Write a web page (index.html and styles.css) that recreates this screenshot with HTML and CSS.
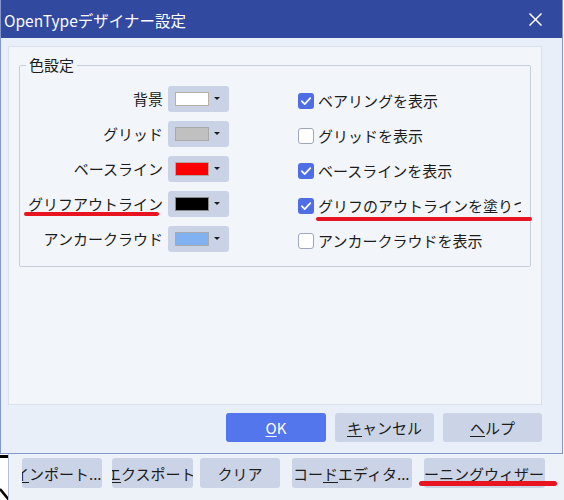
FILE: index.html
```html
<!DOCTYPE html>
<html lang="ja">
<head>
<meta charset="utf-8">
<title>OpenTypeデザイナー設定</title>
<link rel="stylesheet" href="styles.css">
</head>
<body>
<div class="screen">
  <div class="dialog">
    <div class="titlebar">
      <span class="title">OpenTypeデザイナー設定</span>
      <svg class="close" width="13" height="13" viewBox="0 0 13 13"><path d="M0.5 0.5L12.5 12.5M12.5 0.5L0.5 12.5" stroke="#fff" stroke-width="1.5" fill="none"/></svg>
    </div>
    <div class="body">
      <div class="panel">
        <fieldset class="group">
          <legend>色設定</legend>
          <div class="grid">
            <div class="label">背景</div>
            <div class="combo"><span class="swatch sw-white"></span><span class="arrow"></span></div>
            <div class="check"><span class="box on"><svg width="16" height="16" viewBox="0 0 16 16"><path d="M3.8 8.2L6.7 11.1L12.3 5.2" stroke="#fff" stroke-width="1.7" fill="none" stroke-linecap="round" stroke-linejoin="round"/></svg></span><span class="ctext">ベアリングを表示</span></div>

            <div class="label">グリッド</div>
            <div class="combo"><span class="swatch sw-grey"></span><span class="arrow"></span></div>
            <div class="check"><span class="box"></span><span class="ctext">グリッドを表示</span></div>

            <div class="label">ベースライン</div>
            <div class="combo"><span class="swatch sw-red"></span><span class="arrow"></span></div>
            <div class="check"><span class="box on"><svg width="16" height="16" viewBox="0 0 16 16"><path d="M3.8 8.2L6.7 11.1L12.3 5.2" stroke="#fff" stroke-width="1.7" fill="none" stroke-linecap="round" stroke-linejoin="round"/></svg></span><span class="ctext">ベースラインを表示</span></div>

            <div class="label">グリフアウトライン</div>
            <div class="combo"><span class="swatch sw-black"></span><span class="arrow"></span></div>
            <div class="check"><span class="box on"><svg width="16" height="16" viewBox="0 0 16 16"><path d="M3.8 8.2L6.7 11.1L12.3 5.2" stroke="#fff" stroke-width="1.7" fill="none" stroke-linecap="round" stroke-linejoin="round"/></svg></span><span class="ctext">グリフのアウトラインを塗りつぶす</span></div>

            <div class="label">アンカークラウド</div>
            <div class="combo"><span class="swatch sw-blue"></span><span class="arrow"></span></div>
            <div class="check"><span class="box"></span><span class="ctext">アンカークラウドを表示</span></div>
          </div>
        </fieldset>
      </div>
      <div class="actions">
        <button class="btn primary"><u>O</u>K</button>
        <button class="btn"><u>キ</u>ャンセル</button>
        <button class="btn"><u>ヘ</u>ルプ</button>
      </div>
    </div>
  </div>
  <div class="behind">
    <div class="edge">
      <svg width="8" height="46" viewBox="0 0 8 46"><path d="M0 2.5H8" stroke="#000" stroke-width="3"/><path d="M0 35L9 46" stroke="#000" stroke-width="2.5"/></svg>
    </div>
    <div class="tools">
      <button class="tbtn t-imp"><span class="tt"><u>イ</u>ンポート...</span></button>
      <button class="tbtn t-exp"><span class="tt"><u>エ</u>クスポート</span></button>
      <button class="tbtn t-clr"><span class="tt">クリア</span></button>
      <button class="tbtn t-code"><span class="tt">コー<u>ド</u>エディタ...</span></button>
      <button class="tbtn t-kern"><span class="tt">カーニングウィザード</span></button>
    </div>
  </div>
  <span class="mark m1"></span>
  <span class="mark m2"></span>
  <span class="mark m3"></span>
</div>
</body>
</html>
```

FILE: styles.css
```css
html, body {
  margin: 0;
  padding: 0;
  background: #ffffff;
}

body {
  font-family: "Noto Sans CJK JP", "Noto Sans", sans-serif;
  font-size: 15px;
  color: #1c1c1c;
}

.screen {
  position: relative;
  width: 564px;
  height: 500px;
  overflow: hidden;
}

.dialog {
  width: 563px;
  height: 454px;
  box-sizing: border-box;
  border: 1px solid #8595cf;
  border-top: none;
  background: #e9eff8;
}

.titlebar {
  height: 38px;
  background: #3249a0;
  color: #ffffff;
  display: flex;
  align-items: center;
  justify-content: space-between;
  padding: 0 20px 0 3px;
  box-sizing: border-box;
}

.title {
  font-size: 15.5px;
  line-height: 20px;
  padding-top: 1px;
}

.close {
  display: block;
}

.body {
  padding: 8px 20px 0 7px;
}

.panel {
  height: 359px;
  box-sizing: border-box;
  border: 1px solid #dae1ec;
  background: #f2f6fb;
  padding: 8px 10px 0 10px;
}

.group {
  margin: 0;
  padding: 0 0 10px 0;
  border: 1px solid #c6ceda;
  border-radius: 2px;
  min-width: 0;
}

.group legend {
  margin-left: 6px;
  padding: 0 3px;
  font-size: 15px;
  line-height: 20px;
}

.grid {
  display: grid;
  grid-template-columns: 143px 61px 1fr;
  grid-auto-rows: 35px;
  column-gap: 5px;
  align-items: center;
  padding-top: 6px;
}

.label {
  text-align: right;
  white-space: nowrap;
  line-height: 20px;
}

.combo {
  height: 26px;
  background: #cad3e6;
  border-radius: 3px;
  display: flex;
  align-items: center;
  padding-left: 7px;
}

.swatch {
  width: 34px;
  height: 14px;
  box-sizing: border-box;
  border: 1px solid #a9a9a9;
}

.sw-white { background: #ffffff; border-color: #b8b0a4; }
.sw-grey { background: #c0c0c0; }
.sw-red { background: #ff0000; }
.sw-black { background: #000000; border-color: #8a8a8a; }
.sw-blue { background: #80b2f2; }

.arrow {
  margin-left: 5px;
  width: 0;
  height: 0;
  border-left: 3px solid transparent;
  border-right: 3px solid transparent;
  border-top: 3px solid #1e1e1e;
}

.check {
  display: flex;
  align-items: center;
  margin-left: 64px;
  padding-top: 4px;
  width: 223px;
  overflow: hidden;
  white-space: nowrap;
  line-height: 20px;
}

.box {
  flex: none;
  width: 16px;
  height: 16px;
  box-sizing: border-box;
  border: 1px solid #9ea7b8;
  border-radius: 3px;
  background: #ffffff;
  margin-right: 4px;
}

.box.on {
  border: none;
  background: #4f6ee6;
}

.box svg {
  display: block;
}

.actions {
  display: flex;
  justify-content: flex-end;
  gap: 9px;
  margin-top: 8px;
}

.btn {
  width: 99px;
  height: 29px;
  border: none;
  border-radius: 3px;
  background: #cbd4e6;
  font-family: inherit;
  font-size: 15px;
  color: #1c1c1c;
  padding: 0;
}

.btn.primary {
  width: 100px;
  background: #5476ec;
  color: #ffffff;
}

.btn u, .tbtn u {
  text-underline-offset: 2px;
}

.behind {
  display: flex;
  height: 46px;
}

.edge {
  width: 8px;
  background: #ffffff;
}

.edge svg {
  display: block;
}

.tools {
  flex: 1;
  display: flex;
  align-items: flex-start;
  background: #edf2f9;
  border-left: 1px solid #b7c1d6;
  padding: 4px 0 0 13px;
}

.tbtn {
  height: 30px;
  border: none;
  border-radius: 3px;
  background: #cbd4e6;
  font-family: inherit;
  font-size: 15px;
  color: #1c1c1c;
  padding: 0;
  display: flex;
  align-items: center;
  justify-content: flex-start;
  overflow: hidden;
  white-space: nowrap;
}

.tt {
  flex: none;
}

.t-imp { width: 80px; }
.t-imp .tt { margin-left: -8px; }

.t-exp { width: 81px; margin-left: 10px; }
.t-exp .tt { margin-left: -6px; }

.t-clr { width: 80px; margin-left: 7px; justify-content: center; }

.t-code { width: 120px; margin-left: 12px; }
.t-code .tt { margin-left: 1px; }

.t-kern { width: 121px; margin-left: 12px; }
.t-kern .tt { margin-left: -15px; }

.mark {
  position: absolute;
  background: #e8141f;
  border-radius: 3px;
  height: 4px;
}

.m1 { left: 24px; top: 212px; width: 135px; }
.m2 { left: 316px; top: 217px; width: 216px; }
.m3 { left: 419px; top: 481px; width: 138px; height: 5px; }
```
